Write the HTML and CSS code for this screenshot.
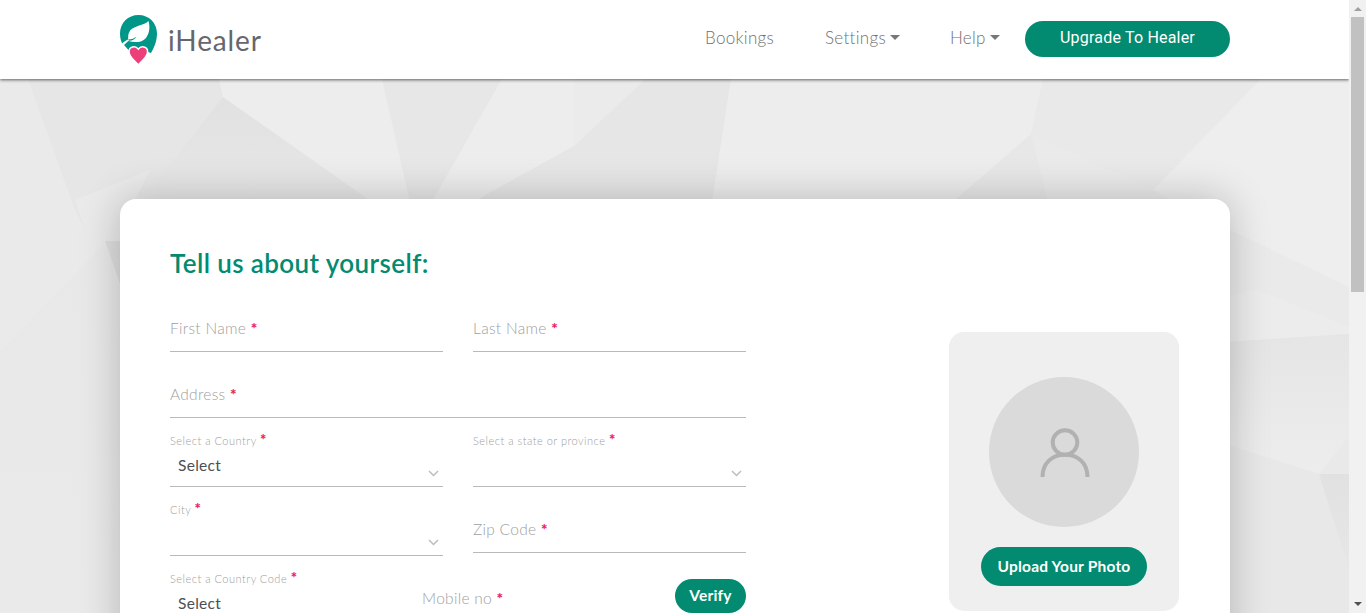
FILE: index.html
```html
<!DOCTYPE html>
<html lang="en">
<head>
<meta charset="utf-8">
<title>iHealer</title>
<link rel="stylesheet" href="styles.css">
</head>
<body>
<div class="window">
  <div class="page">
    <svg class="backdrop" viewBox="0 0 1349 613" aria-hidden="true">
      <defs>
        <linearGradient id="fade" x1="0" y1="0" x2="0" y2="1"><stop offset="0" stop-color="#e5e5e5"/><stop offset="1" stop-color="#ededed"/></linearGradient>
        <linearGradient id="shade" x1="0" y1="0" x2="0" y2="1"><stop offset="0" stop-color="#e1e1e1"/><stop offset="1" stop-color="#e7e7e7"/></linearGradient>
        <linearGradient id="soft" x1="0" y1="0" x2="0" y2="1"><stop offset="0" stop-color="#e8e8e8"/><stop offset="1" stop-color="#eaeaea"/></linearGradient>
      </defs>
      <rect width="1349" height="613" fill="#eaeaea"/>
      <path fill="#e6e6e6" d="M28 79H219L223 97 138 205 90 240 75 210Z"/>
      <path fill="#eaeaea" d="M75 200 150 170 130 210 90 245Z"/>
      <path fill="url(#soft)" d="M0 352 105 243 120 287V613H0Z"/>
      <path fill="#dedede" d="M105 241H122V290Z"/>
      <path fill="url(#shade)" d="M223 97 138 205H385Z"/>
      <path fill="#ededed" d="M219 79 223 97 372 202H410L382 79Z"/>
      <path fill="#e7e7e7" d="M382 79 410 202H432L502 79Z"/>
      <path fill="#ededed" d="M502 79 432 202H473L574 146 645 79Z"/>
      <path fill="#e6e6e6" d="M645 79 574 146 473 202H712L731 79Z"/>
      <path fill="#ebebeb" d="M574 79H645L574 146Z"/>
      <path fill="#ededed" d="M731 79 712 202H953L1031 134 1043 79Z"/>
      <path fill="#e7e7e7" d="M1031 134 953 202H1048Z"/>
      <path fill="#e9e9e9" d="M1043 79 1031 134 1153 190 1261 79Z"/>
      <path fill="#eeeeee" d="M1261 79 1153 190 1230 230 1349 287V79Z"/>
      <path fill="#eaeaea" d="M1225 228 1349 287V327L1255 289 1225 298Z"/>
      <path fill="#ececec" d="M1225 298 1255 289 1349 327V334L1225 342Z"/>
      <path fill="url(#fade)" d="M1225 342 1349 334V437L1319 474 1225 444Z"/>
      <path fill="#e8e8e8" d="M1225 444 1319 474 1349 570V613H1225Z"/>
      <path fill="#e9e9e9" d="M1349 437V474H1319Z"/>
      <path fill="url(#shade)" d="M1319 474H1349V570Z"/>
    </svg>
    <header class="topbar">
      <a class="brand">
        <svg class="brand-mark" width="38" height="50" viewBox="0 0 38 50" aria-hidden="true">
          <path fill="#009688" d="M18.500 0C8 0 0 8 0 18.500c0 4 .8 7 2 9.500L9.500 38c1-5 5-6 9-3 4-3 8-2 9.500 2l3 1c3-5 6-12 6-19.500C37 8 29 0 18.500 0Z"/>
          <path fill="#fff" d="M28.500 6C25 11 12 10 9 17.500c-1.300 3-.5 5-1 7C6 25 4 27 2 28.500l1.500 3c2-3 3-4 5-5.500 6 2 14 1.500 17.500-3 4-6 4-11 2.500-17Z"/>
          <path fill="#009688" d="M8 24.500c4 0 6-1 8.500-3-2 3-4 4-7.500 4.300Z"/>
          <path fill="#fff" d="M1.500 29 4 28l6.500 10-2 1Z"/>
          <path fill="#009688" d="M4 30c2-2 4-2 6.500-2l-1 8Z"/>
          <path fill="#ec407a" stroke="#fff" stroke-width="1.500" d="M18.300 50C14 45 9 42 9 36.500c0-5 6.500-6.500 9.300-2.300 2.800-4.200 9.300-2.700 9.300 2.300 0 5.500-5 8.500-9.300 13.500Z"/>
        </svg>
        <span class="brand-name">iHealer</span>
      </a>
      <nav class="menu">
        <a class="menu-link">Bookings</a>
        <a class="menu-link settings">Settings<i class="caret"></i></a>
        <a class="menu-link help">Help<i class="caret"></i></a>
        <button class="pill upgrade">Upgrade To Healer</button>
      </nav>
    </header>
    <main class="card">
      <section class="form">
        <h1 class="title">Tell us about yourself:</h1>
        <div class="row">
          <div class="field first"><label class="label">First Name <b class="req">*</b></label></div>
          <div class="field first"><label class="label">Last Name <b class="req">*</b></label></div>
        </div>
        <div class="row">
          <div class="field address"><label class="label">Address <b class="req">*</b></label></div>
        </div>
        <div class="row">
          <div class="field choice">
            <label class="small">Select a Country <b class="req">*</b></label>
            <span class="value">Select</span>
            <svg class="chevron" width="11" height="7" viewBox="0 0 11 7"><path d="M1 1 5.500 5.500 10 1"/></svg>
          </div>
          <div class="field choice">
            <label class="small">Select a state or province <b class="req">*</b></label>
            <svg class="chevron" width="11" height="7" viewBox="0 0 11 7"><path d="M1 1 5.500 5.500 10 1"/></svg>
          </div>
        </div>
        <div class="row">
          <div class="field choice">
            <label class="small">City <b class="req">*</b></label>
            <svg class="chevron" width="11" height="7" viewBox="0 0 11 7"><path d="M1 1 5.500 5.500 10 1"/></svg>
          </div>
          <div class="field zip"><label class="label">Zip Code <b class="req">*</b></label></div>
        </div>
        <div class="row phone">
          <div class="field choice code">
            <label class="small">Select a Country Code <b class="req">*</b></label>
            <span class="value">Select</span>
          </div>
          <div class="field mobile"><label class="label">Mobile no <b class="req">*</b></label></div>
          <button class="pill verify">Verify</button>
        </div>
      </section>
      <aside class="photo">
        <div class="avatar">
          <svg width="50" height="50" viewBox="0 0 50 50" aria-hidden="true"><g fill="none" stroke="#b1b1b1" stroke-width="4"><circle cx="25" cy="14.500" r="12.300"/><path d="M2.500 49C2.500 35 12 26.800 25 26.800S47.500 35 47.500 49"/></g></svg>
        </div>
        <button class="pill upload">Upload Your Photo</button>
      </aside>
    </main>
  </div>
  <div class="scrollbar">
    <i class="arrow up"></i>
    <div class="thumb"></div>
    <i class="arrow down"></i>
  </div>
</div>
</body>
</html>
```
FILE: styles.css
```css
* { box-sizing: border-box; }
body { margin: 0; overflow: hidden; font-family: Lato, "Open Sans", sans-serif; color: #808080; }
.window { display: flex; width: 1366px; height: 613px; overflow: hidden; }
.page { position: relative; width: 1349px; height: 613px; overflow: hidden; isolation: isolate; }
.backdrop { position: absolute; inset: 0; z-index: -1; width: 1349px; height: 613px; }

.topbar { display: flex; justify-content: space-between; height: 79px; padding: 0 119px 0 120px; background: #fff; box-shadow: 0 1px 3px rgba(0,0,0,.6); }
.brand { display: flex; padding-top: 15px; }
.brand-name { margin: 6px 0 0 10px; font: 400 28px/38px Lato, sans-serif; letter-spacing: .85px; color: #66666d; }
.menu { display: flex; padding-top: 21px; }
.menu-link { display: flex; width: 120px; font: 300 17px/34px Lato, sans-serif; letter-spacing: .3px; color: #707070; white-space: nowrap; }
.settings { width: 125px; }
.help { width: 75px; }
.caret { width: 0; height: 0; margin: 14px 0 0 auto; border: 5px solid transparent; border-top-color: #777; border-bottom: 0; }
.settings .caret { margin-right: 50px; }
.help .caret { margin-right: 25px; }
.pill { display: block; border: 0; padding: 0 0 2px; background: #028b70; color: #fff; font: 700 15.5px/20px Lato, sans-serif; letter-spacing: .2px; white-space: nowrap; }
.upgrade { width: 205px; height: 36px; border-radius: 18px; font: 400 16px/34px Roboto, sans-serif; letter-spacing: .2px; }

.card { display: flex; justify-content: space-between; width: 1110px; height: 600px; margin: 120px 0 0 120px; padding: 0 51px 0 50px; background: #fff; border-radius: 16px; box-shadow: 0 0 40px rgba(0,0,0,.23); }
.form { width: 576px; }
.title { margin: 45px 0 0; height: 58px; font: 600 26px/38px Lato, sans-serif; letter-spacing: .4px; color: #028b70; white-space: nowrap; }
.row { display: flex; align-items: flex-start; gap: 30px; }
.field { flex: 1 1 0; display: flex; border-bottom: 1px solid #b9b9b9; }
.first { height: 50px; padding-top: 15px; }
.address, .zip { height: 66px; padding-top: 31px; }
.label { font: 300 15.5px/22px Lato, sans-serif; letter-spacing: .3px; color: #a0a0a0; white-space: nowrap; }
.req { font-weight: 900; color: #e91e63; }
.choice { height: 69px; display: grid; grid-template-columns: 1fr 15px; grid-template-rows: 16px 34px; padding-top: 15px; }
.small { grid-column: 1 / 3; font: 300 11px/16px Lato, sans-serif; letter-spacing: .5px; color: #a0a0a0; }
.small .req { font-size: 15px; line-height: 10px; }
.value { padding-left: 8px; font: 400 15.5px/32px Lato, sans-serif; letter-spacing: .3px; color: #495057; }
.chevron { grid-column: 2; margin-top: 21px; fill: none; stroke: #bdbdbd; stroke-width: 1.5; }
.phone { gap: 0; }
.code { flex: 0 0 222px; margin-right: 30px; }
.mobile { height: 69px; padding-top: 31px; }
.verify { width: 71px; height: 34px; margin-top: 23px; border-radius: 17px; }
.photo { display: flex; flex-direction: column; align-items: center; width: 230px; height: 279px; margin-top: 133px; padding-top: 45px; border-radius: 15px; background: #efefef; }
.avatar { display: flex; width: 150px; height: 150px; padding: 51px 0 0 51px; border-radius: 50%; background: #dadada; }
.upload { width: 166px; height: 39px; margin-top: 20px; border-radius: 20px; }

.scrollbar { display: flex; flex-direction: column; align-items: center; width: 17px; height: 613px; background: #f1f1f1; }
.thumb { width: 13px; height: 275px; margin: 6px 0 auto; background: #c1c1c1; }
.arrow { border: 4px solid transparent; }
.up { margin-top: 7px; border-top: 0; border-bottom-color: #a0a0a0; }
.down { margin-bottom: 7px; border-bottom: 0; border-top-color: #505050; }
```
